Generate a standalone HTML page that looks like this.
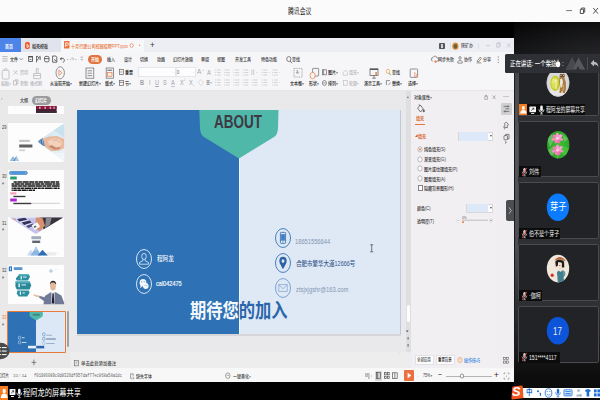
<!DOCTYPE html>
<html lang="zh-CN"><head><meta charset="utf-8"><title>腾讯会议</title>
<style>
html,body{margin:0;padding:0;}
body{width:600px;height:400px;overflow:hidden;background:#000;position:relative;font-family:"Liberation Sans","Noto Sans CJK SC",sans-serif;}
.b{position:absolute;box-sizing:border-box;}
.t{position:absolute;white-space:nowrap;transform-origin:0 50%;display:block;}
svg{position:absolute;overflow:visible;}
.dd{font-size:.7em;margin-left:.12em;position:relative;top:-.08em;font-family:"DejaVu Sans",sans-serif;}
</style></head><body>
<div class="b" style="left:0px;top:0px;width:600px;height:21.5px;background:#fbfbfb;"></div>
<span class="t" style="left:287.6px;top:7.50px;font-size:7.6px;line-height:7.6px;color:#222;font-weight:400;transform:scaleX(0.77);">腾讯会议</span>
<svg style="left:560px;top:4px" width="40" height="14" viewBox="560 4 40 14"><g stroke="#555" stroke-width="1" fill="none"><path d="M566.200 10.600h5.800" stroke="#777"/><path d="M580.3 9.2h3.2v4.3h-3.2z M581.6 9.2v-1.2h3.1v4.2h-1.2"/><path d="M593.3 8l4.6 5.6M597.9 8l-4.6 5.6"/></g></svg>
<div class="b" style="left:514px;top:21.5px;width:86px;height:378.5px;background:#1b1c1e;background:radial-gradient(ellipse 120px 60px at 100% 40px,rgba(40,41,44,0.9),rgba(40,41,44,0) 100%),linear-gradient(180deg,#030303 0,#0a0a0b 20px,#19191b 50px,#1a1b1d 335px,#0e0e0f 352px,#080808 100%);"></div>
<div class="b" style="left:0px;top:38.4px;width:513.8px;height:343.4px;background:#e8e8e8;"></div>
<div class="b" style="left:0px;top:38.4px;width:513.8px;height:13.2px;background:#eceef3;"></div>
<div class="b" style="left:0px;top:38.4px;width:21px;height:13.2px;background:#4d84ea;"></div>
<span class="t" style="left:5px;top:43.60px;font-size:5.0px;line-height:5.0px;color:#fff;font-weight:700;transform:scaleX(0.8);">首页</span>
<div class="b" style="left:21px;top:38.4px;width:40px;height:13.2px;background:#e1e4ec;"></div>
<div class="b" style="left:61px;top:39.5px;width:83px;height:12.1px;background:#f6f7f9;"></div>
<div class="b" style="left:0px;top:51.6px;width:513.8px;height:38.6px;background:#f6f6f8;"></div>
<div class="b" style="left:0px;top:90.2px;width:70px;height:279px;background:#e9e9e9;"></div>
<div class="b" style="left:70px;top:90.2px;width:341px;height:262px;background:#e9e8ea;"></div>
<div class="b" style="left:70px;top:352px;width:341px;height:17px;background:#ededed;"></div>
<div class="b" style="left:411px;top:90.2px;width:86px;height:279px;background:#f1eff1;"></div>
<div class="b" style="left:497px;top:90.2px;width:16.8px;height:279px;background:#f0eef0;"></div>
<div class="b" style="left:0px;top:368.4px;width:513.8px;height:13.4px;background:#f7f7f8;"></div>
<div class="b" style="left:77px;top:109.8px;width:162px;height:224.6px;background:#2e72b5;"></div>
<div class="b" style="left:239px;top:109.8px;width:162px;height:224.6px;background:#dee9f5;"></div>
<div class="b" style="left:238.9px;top:109.8px;width:0.9px;height:224.6px;background:#e6f8fc;"></div>
<svg style="left:199px;top:109.8px" width="80" height="50" viewBox="0 0 80 50"><path d="M0.3 0H79.5L79 18Q78.8 24.5 75 27L40 48.5L5 27Q1.2 24.5 1 18Z" fill="#50b8a9"/></svg>
<span class="t" style="left:214.3px;top:112.80px;font-size:18px;line-height:18px;color:#3d3a45;font-weight:700;transform:scaleX(0.75);">ABOUT</span>
<div class="b" style="left:0px;top:381.8px;width:514px;height:18.2px;background:#000;"></div>
<svg style="left:133.5px;top:246.5px" width="20" height="24" viewBox="-10 -12 20 24"><ellipse cx="0" cy="0" rx="7.5" ry="9.45" fill="none" stroke="#e8f0fa" stroke-width="0.9"/><g fill="none" stroke="#e8f0fa" stroke-width="0.8"><ellipse cx="0" cy="-2.6" rx="2.3" ry="3"/><path d="M-1.2 0.2v1.6L-4.4 3.4v1.8h8.8v-1.8L1.2 1.8v-1.6"/></g></svg>
<span class="t" style="left:157px;top:254.90px;font-size:7px;line-height:7px;color:#f2f6fb;font-weight:500;transform:scaleX(0.8);">程阿龙</span>
<svg style="left:133.5px;top:272.3px" width="20" height="24" viewBox="-10 -12 20 24"><ellipse cx="0" cy="0" rx="7.5" ry="9.45" fill="none" stroke="#e8f0fa" stroke-width="0.9"/><g fill="#f4f8fc"><ellipse cx="-1" cy="-1.2" rx="3.4" ry="3.8"/><ellipse cx="1.8" cy="2" rx="2.8" ry="3"/><path d="M-3.4 1.5l-0.6 2.4 2.2-1.2z"/></g><g fill="#2e72b5"><circle cx="-2.2" cy="-2.2" r="0.5"/><circle cx="0.2" cy="-2.2" r="0.5"/><circle cx="1" cy="1.4" r="0.4"/><circle cx="2.8" cy="1.4" r="0.4"/></g></svg>
<span class="t" style="left:156.2px;top:280.20px;font-size:7.2px;line-height:7.2px;color:#f2f6fb;font-weight:400;transform:scaleX(0.775);-webkit-text-stroke:0.2px #f2f6fb;">cal042475</span>
<svg style="left:272.6px;top:226.4px" width="20" height="24" viewBox="-10 -12 20 24"><ellipse cx="0" cy="0" rx="7.5" ry="9.45" fill="none" stroke="#3873b4" stroke-width="0.9"/><g fill="none" stroke="#3873b4" stroke-width="0.9"><rect x="-2.6" y="-5.6" width="5.2" height="11" rx="0.8"/></g><rect x="-1.9" y="-3.9" width="3.8" height="6.6" fill="#3f7fc6"/><rect x="-0.6" y="3.5" width="1.2" height="0.9" fill="#3873b4"/></svg>
<span class="t" style="left:295px;top:238.10px;font-size:7px;line-height:7px;color:#8395b4;font-weight:400;transform:scaleX(0.82);">18651556644</span>
<svg style="left:272.6px;top:251.2px" width="20" height="24" viewBox="-10 -12 20 24"><ellipse cx="0" cy="0" rx="7.5" ry="9.45" fill="none" stroke="#3873b4" stroke-width="0.9"/><path d="M0 6.2C-1.6 3.2 -3.7 0.6 -3.7 -1.9A3.7 4.3 0 0 1 3.7 -1.9C3.7 0.6 1.6 3.2 0 6.2Z" fill="#2d62a3"/><ellipse cx="0" cy="-1.9" rx="1.5" ry="1.8" fill="#dde8f6"/></svg>
<span class="t" style="left:296px;top:260.60px;font-size:6.6px;line-height:6.6px;color:#34568a;font-weight:500;transform:scaleX(0.835);">合肥市繁华大道12666号</span>
<svg style="left:272.6px;top:276.4px" width="20" height="24" viewBox="-10 -12 20 24"><ellipse cx="0" cy="0" rx="7.5" ry="9.45" fill="none" stroke="#7399cc" stroke-width="0.9"/><g fill="none" stroke="#88a8d2" stroke-width="0.8"><rect x="-4.2" y="-3.3" width="8.4" height="6.6"/><path d="M-4.2 -3.3L0 0.8L4.2 -3.3"/></g></svg>
<span class="t" style="left:296px;top:285.50px;font-size:7px;line-height:7px;color:#8395b4;font-weight:400;transform:scaleX(0.83);">ztsjxjgshr@163.com</span>
<div class="b" style="left:77px;top:300.8px;width:162px;height:30px;overflow:hidden"><span class="t" style="left:113.4px;top:0.5px;font-size:20px;line-height:20px;font-weight:700;color:#f4f8fc;transform:scaleX(0.8125)">期待您的加入</span></div>
<div class="b" style="left:239px;top:300.8px;width:162px;height:30px;overflow:hidden"><span class="t" style="left:-48.6px;top:0.5px;font-size:20px;line-height:20px;font-weight:700;color:#2b65aa;transform:scaleX(0.8125)">期待您的加入</span></div>
<svg style="left:369px;top:244px" width="6" height="9" viewBox="0 0 6 9"><path d="M1.2 0.8h3M2.7 0.8v7M1.2 7.8h3" stroke="#444" stroke-width="0.7" fill="none"/></svg>
<div class="b" style="left:77px;top:334.4px;width:324px;height:1.2px;background:#d4d6da;"></div>
<div class="b" style="left:406px;top:90.2px;width:5px;height:262px;background:#dfdee0;"></div>
<div class="b" style="left:400.4px;top:109.8px;width:0.9px;height:224.6px;background:#bdc9d9;"></div>
<div class="b" style="left:406.6px;top:304.5px;width:3.6px;height:17px;background:#fdfdfd;border-radius:2px;"></div>
<svg style="left:404px;top:328px" width="6" height="24" viewBox="404 328 6 24"><g fill="#555"><path d="M407.2 330.6l1.4 1.6h-2.8z" transform="rotate(180 407.2 331.4)"/><rect x="407.6" y="337" width="0.9" height="2.6"/><rect x="407.6" y="344" width="0.9" height="2.6"/></g></svg>
<div class="b" style="left:515.2px;top:73px;width:84.8px;height:296px;background:;background:linear-gradient(180deg,#2f3033 0,#2f3033 232px,#1c1c1e 277px,#101011 296px);"></div>
<div class="b" style="left:515.2px;top:73px;width:2.8px;height:296px;background:;background:linear-gradient(180deg,#44464a 0,#54565a 67px,#4c4e52 172px,#2e2f32 232px,#1c1c1e 277px,#101011 296px);"></div>
<div class="b" style="left:517.6px;top:59.3px;width:81.4px;height:56.6px;background:#222326;border:1px solid #4a4b4f;border-radius:1.8px;"></div>
<div class="b" style="left:517.6px;top:120.8px;width:81.4px;height:56.6px;background:#222326;border:1px solid #4a4b4f;border-radius:1.8px;"></div>
<div class="b" style="left:517.6px;top:182.3px;width:81.4px;height:56.6px;background:#222326;border:1px solid #4a4b4f;border-radius:1.8px;"></div>
<div class="b" style="left:517.6px;top:244.3px;width:81.4px;height:56.6px;background:#222326;border:1px solid #4a4b4f;border-radius:1.8px;"></div>
<div class="b" style="left:517.6px;top:306.3px;width:81.4px;height:56.6px;background:#222326;border:1px solid #4a4b4f;border-radius:1.8px;"></div>
<svg style="left:546px;top:68px" width="24" height="30" viewBox="546 68 24 30"><defs><clipPath id="c1"><ellipse cx="558" cy="82.8" rx="11.3" ry="13.8"/></clipPath></defs><ellipse cx="558" cy="82.8" rx="11.3" ry="13.8" fill="#d9d9db"/><g clip-path="url(#c1)"><ellipse cx="558" cy="92" rx="9" ry="5" fill="#e6e6e8"/><ellipse cx="555.2" cy="83.4" rx="4.9" ry="7.6" fill="#c6cc2c"/><ellipse cx="554.6" cy="83.2" rx="3.3" ry="5.6" fill="#dbe04e"/><ellipse cx="553.8" cy="81" rx="1.6" ry="2.4" fill="#e6ea78"/><path d="M555.6 78.4h0.9v10.6h-0.9z" fill="#eef0e4"/><path d="M554.8 80.6h2.4v1h-2.4z" fill="#eef0e4"/><path d="M559.6 75.2l1.2-1.6 1.4 0.8 1.6-0.8 1 1.8-0.4 2.6 1.4 4 0.2 6.4-1 4.6h-2.2l-0.4-3-1.4 3h-1.6l0.6-6-0.8-5z" fill="#a97a42"/><path d="M560.2 79l1.8-0.6 1 3.4-0.6 4.6-1.8 1.6-0.6-4.8z" fill="#ece8de"/><path d="M560.2 74.6h4.2v2.2h-4.2z" fill="#5a4630"/><circle cx="561" cy="75.6" r="0.5" fill="#f4f4f4"/><circle cx="563.4" cy="75.6" r="0.5" fill="#f4f4f4"/><path d="M562.6 84l1.8 1.4-0.4 5-1.6 1.2z" fill="#c79a5c"/></g><ellipse cx="558" cy="82.8" rx="11.1" ry="13.6" fill="none" stroke="#c4c4c6" stroke-width="0.5"/></svg>
<div class="b" style="left:518.5px;top:104.2px;width:66px;height:11.2px;background:#0b0b0c;"></div>
<div class="b" style="left:518.5px;top:104.2px;width:8.8px;height:11.2px;background:#f57c1f;"></div>
<svg style="left:518.5px;top:104.2px" width="9" height="11.2" viewBox="0 0 9 11.2"><ellipse cx="4.4" cy="3.9" rx="1.5" ry="1.9" fill="#fff"/><path d="M1.2 9.6c0-2.6 1.6-3.6 3.2-3.6s3.2 1 3.2 3.6z" fill="#fff"/></svg>
<svg style="left:529px;top:105.5px" width="8" height="9" viewBox="0 0 8 9"><rect x="0.4" y="0.6" width="6.6" height="5.6" rx="0.6" fill="#f4f4f4"/><path d="M2.2 4.6l2.6-2.4M4.8 2.2h-1.6M4.8 2.2v1.6" stroke="#222" stroke-width="0.7" fill="none"/><rect x="2.2" y="7" width="3" height="0.9" fill="#f4f4f4"/></svg>
<svg style="left:537.6px;top:105px" width="7" height="10" viewBox="0 0 7 10"><rect x="2.2" y="0.6" width="2.6" height="5.4" rx="1.3" fill="#f4f4f4"/><path d="M1 4.4a2.5 2.8 0 0 0 5 0M3.5 7.2v1.5M2.2 9h2.6" fill="none" stroke="#f4f4f4" stroke-width="0.8"/></svg>
<span class="t" style="left:545.5px;top:107.35px;font-size:6.3px;line-height:6.3px;color:#f4f4f4;font-weight:400;transform:scaleX(0.77);">程阿龙的屏幕共享</span>
<svg style="left:546px;top:130px" width="24" height="30" viewBox="546 130 24 30"><defs><clipPath id="c2"><ellipse cx="558.2" cy="144.7" rx="11.2" ry="13.8"/></clipPath><radialGradient id="g2" cx="0.55" cy="0.5" r="0.65"><stop offset="0" stop-color="#3fc234"/><stop offset="0.7" stop-color="#2fa42a"/><stop offset="1" stop-color="#257f22"/></radialGradient></defs><g clip-path="url(#c2)"><rect x="546" y="130" width="24" height="30" fill="url(#g2)"/><path d="M547 138l5-4 2 6-4 7zM548 150l5-3 1 7-4 3zM563 134l5 5-4 3z" fill="#8fd888" opacity="0.5"/><path d="M563 146l6 2-3 8-4-2z" fill="#4fd040" opacity="0.6"/><path d="M557.600 154.500v5" stroke="#7fcf58" stroke-width="0.7"/><g transform="translate(557.4 138.6) scale(1.16) translate(-557.4 -138.6)"><ellipse cx="555.08" cy="139.09" rx="2.80" ry="1.30" fill="#f58fc2" transform="rotate(170 555.08 139.09)"/><ellipse cx="559.72" cy="139.09" rx="2.80" ry="1.30" fill="#f58fc2" transform="rotate(10 559.72 139.09)"/><ellipse cx="555.54" cy="137.05" rx="2.70" ry="1.40" fill="#f27db6" transform="rotate(-145 555.54 137.05)"/><ellipse cx="559.33" cy="136.99" rx="2.80" ry="1.40" fill="#f9a6cf" transform="rotate(-35 559.33 136.99)"/><ellipse cx="557.40" cy="136.10" rx="2.50" ry="1.50" fill="#f797c8" transform="rotate(-90 557.40 136.10)"/><ellipse cx="558.22" cy="140.68" rx="2.30" ry="1.40" fill="#ee70ae" transform="rotate(65 558.22 140.68)"/><ellipse cx="556.62" cy="140.59" rx="2.20" ry="1.40" fill="#f283ba" transform="rotate(115 556.62 140.59)"/><ellipse cx="557.4" cy="138.29999999999998" rx="1.3" ry="1.4" fill="#fbc9e2"/></g><g transform="translate(557.6 150.4) scale(1.16) translate(-557.6 -150.4)"><ellipse cx="555.28" cy="150.89" rx="2.80" ry="1.30" fill="#f58fc2" transform="rotate(170 555.28 150.89)"/><ellipse cx="559.92" cy="150.89" rx="2.80" ry="1.30" fill="#f58fc2" transform="rotate(10 559.92 150.89)"/><ellipse cx="555.74" cy="148.85" rx="2.70" ry="1.40" fill="#f27db6" transform="rotate(-145 555.74 148.85)"/><ellipse cx="559.53" cy="148.79" rx="2.80" ry="1.40" fill="#f9a6cf" transform="rotate(-35 559.53 148.79)"/><ellipse cx="557.60" cy="147.90" rx="2.50" ry="1.50" fill="#f797c8" transform="rotate(-90 557.60 147.90)"/><ellipse cx="558.42" cy="152.48" rx="2.30" ry="1.40" fill="#ee70ae" transform="rotate(65 558.42 152.48)"/><ellipse cx="556.82" cy="152.39" rx="2.20" ry="1.40" fill="#f283ba" transform="rotate(115 556.82 152.39)"/><ellipse cx="557.6" cy="150.1" rx="1.3" ry="1.4" fill="#fbc9e2"/></g></g></svg>
<div class="b" style="left:518.5px;top:166.2px;width:22.5px;height:11px;background:#0c0c0d;"></div>
<svg style="left:520.8px;top:166.7px" width="7" height="10" viewBox="0 0 7 10"><rect x="2.3" y="1" width="2.4" height="5" rx="1.2" fill="#cfcfcf"/><path d="M1.2 4.6a2.3 2.6 0 0 0 4.6 0M3.5 7.2v1.4M2.2 8.8h2.6" fill="none" stroke="#bdbdbd" stroke-width="0.7"/><path d="M5.8 0.8L1.2 9" stroke="#e0413a" stroke-width="0.9"/></svg>
<span class="t" style="left:529px;top:169.25px;font-size:6.3px;line-height:6.3px;color:#f2f2f2;font-weight:400;transform:scaleX(0.8);">刘伟</span>
<svg style="left:546px;top:192px" width="24" height="30" viewBox="546 192 24 30"><ellipse cx="557.900" cy="207.200" rx="11.100" ry="13.800" fill="#0b7bff"/></svg>
<span class="t" style="left:549.6px;top:202.30px;font-size:10.4px;line-height:10.4px;color:#fff;font-weight:400;transform:scaleX(0.8);">芽子</span>
<div class="b" style="left:518.5px;top:228.2px;width:41.5px;height:11px;background:#0c0c0d;"></div>
<svg style="left:520.8px;top:228.7px" width="7" height="10" viewBox="0 0 7 10"><rect x="2.3" y="1" width="2.4" height="5" rx="1.2" fill="#cfcfcf"/><path d="M1.2 4.6a2.3 2.6 0 0 0 4.6 0M3.5 7.2v1.4M2.2 8.8h2.6" fill="none" stroke="#bdbdbd" stroke-width="0.7"/><path d="M5.8 0.8L1.2 9" stroke="#e0413a" stroke-width="0.9"/></svg>
<span class="t" style="left:529px;top:231.25px;font-size:6.3px;line-height:6.3px;color:#f2f2f2;font-weight:400;transform:scaleX(0.8);">伯不是个芽子</span>
<svg style="left:546px;top:254px" width="24" height="30" viewBox="546 254 24 30"><defs><clipPath id="c4"><ellipse cx="558" cy="268.6" rx="11.2" ry="13.8"/></clipPath></defs><ellipse cx="558" cy="268.6" rx="11.2" ry="13.8" fill="#f1e7db"/><g clip-path="url(#c4)"><path d="M557 272.6c0.6-2 2.4-2.8 4.200-2.600 2.400 0.200 4.200 1.800 4 4.600l-1.600 3 0.600 6.400h-6.200l-0.600-6z" fill="#427f8e"/><path d="M562.6 270.600c2 0 3 1.800 2.600 3.800l-1.800 2.200z" fill="#5a97a4"/><path d="M559.400 266h2.400l0.600 4.600-2 1.400-1.800-1.600z" fill="#f2dccb"/><path d="M555.300 262.200c0-3.600 8.700-3.800 8.800 0.400l0.200 4.600-1.800 0.600-0.800-1.600v-3.200l-3.400-0.800-0.600 3.800-1.800 0.800z" fill="#1f1b1c"/><path d="M558.200 262.200l3.400 0.600v3.200l-1.400 1.400-1.800-0.600z" fill="#f6e4d6"/><rect x="559" y="265.200" width="1.400" height="0.700" fill="#c8342e"/><path d="M554.400 260.600c1.400-2.600 4.600-3.800 7.600-3 2 0.600 3.400 2.200 3.800 4-3.600-1.600-7.600-2-11.400-1z" fill="#b58456"/><path d="M557.600 257.800c1.800-0.800 4.400-0.400 6 1.200-2-0.400-4-0.600-6-0.200z" fill="#b83a34"/><ellipse cx="552.200" cy="275.200" rx="1.600" ry="1.800" fill="#cf2f2c"/><path d="M553.800 275.600l3.600 1 0.200 1-3.800-0.800z" fill="#f2dccb"/></g></svg>
<div class="b" style="left:518.5px;top:290.2px;width:23.5px;height:11px;background:#0c0c0d;"></div>
<svg style="left:520.8px;top:290.7px" width="7" height="10" viewBox="0 0 7 10"><rect x="2.3" y="1" width="2.4" height="5" rx="1.2" fill="#cfcfcf"/><path d="M1.2 4.6a2.3 2.6 0 0 0 4.6 0M3.5 7.2v1.4M2.2 8.8h2.6" fill="none" stroke="#bdbdbd" stroke-width="0.7"/><path d="M5.8 0.8L1.2 9" stroke="#e0413a" stroke-width="0.9"/></svg>
<span class="t" style="left:529px;top:293.25px;font-size:6.3px;line-height:6.3px;color:#f2f2f2;font-weight:400;transform:scaleX(0.8);">·伽柯</span>
<svg style="left:546px;top:316px" width="24" height="30" viewBox="546 316 24 30"><ellipse cx="557.900" cy="330.800" rx="11.100" ry="13.800" fill="#0c54da"/></svg>
<span class="t" style="left:553.3px;top:325.70px;font-size:11px;line-height:11px;color:#ececec;font-weight:400;transform:scaleX(0.72);">17</span>
<div class="b" style="left:518.5px;top:351.8px;width:41.5px;height:11px;background:#0c0c0d;"></div>
<svg style="left:520.8px;top:352.3px" width="7" height="10" viewBox="0 0 7 10"><rect x="2.3" y="1" width="2.4" height="5" rx="1.2" fill="#cfcfcf"/><path d="M1.2 4.6a2.3 2.6 0 0 0 4.6 0M3.5 7.2v1.4M2.2 8.8h2.6" fill="none" stroke="#bdbdbd" stroke-width="0.7"/><path d="M5.8 0.8L1.2 9" stroke="#e0413a" stroke-width="0.9"/></svg>
<span class="t" style="left:529px;top:354.70px;font-size:6.6px;line-height:6.6px;color:#f2f2f2;font-weight:400;transform:scaleX(0.78);">151****4117</span>
<div class="b" style="left:505px;top:53.6px;width:95px;height:19.6px;background:#2e3035;border-radius:1.5px 0 0 1.5px;"></div>
<span class="t" style="left:510px;top:61.10px;font-size:6.8px;line-height:6.8px;color:#fff;font-weight:500;transform:scaleX(0.8);">正在讲话: 一个柴捻</span>
<svg style="left:555px;top:59px" width="6" height="9" viewBox="0 0 6 9"><ellipse cx="3" cy="5.2" rx="2.2" ry="3" fill="#fff"/><path d="M3 2.2v-1.6" stroke="#fff" stroke-width="0.8"/></svg>
<span class="t" style="left:561.5px;top:61.10px;font-size:6.8px;line-height:6.8px;color:#fff;font-weight:400;transform:scaleX(0.8);">:</span>
<svg style="left:565px;top:56px" width="22" height="15" viewBox="565 56 22 15"><path d="M565.8 69.4l6.2-12 3.4 6.4 3.2-6.4 6.6 12h-5.4l-1.8-3.4-1.8 3.4z" fill="#56585d"/><path d="M572 57.4l3.4 6.4-3 5.6h-6.600z" fill="#47494e"/></svg>
<div class="b" style="left:587px;top:57px;width:0.7px;height:13px;background:#4a4c50;"></div>
<svg style="left:590px;top:58.5px" width="9" height="10" viewBox="0 0 9 10"><path d="M4 0.8L0.6 4.2L4 7.6V5.6c2.2-0.2 3.4 0.6 4.4 2.6C8.2 5 7 3 4 2.8Z" fill="#b9bbbf"/></svg>
<div class="b" style="left:521px;top:387.6px;width:79px;height:10.6px;background:#fdfdfd;border-radius:2px 0 0 2px;"></div>
<svg style="left:510px;top:384.5px" width="14" height="15" viewBox="0 0 14 15"><path d="M2.200 2.400Q2.300 1.500 3.200 1.400L11.600 0.400Q12.600 0.400 12.700 1.400L13.400 12.200Q13.400 13.200 12.400 13.300L2.400 14.400Q1.400 14.400 1.400 13.400Z" fill="#f2551f"/></svg>
<span class="t" style="left:512.4px;top:385.05px;font-size:13.5px;line-height:13.5px;color:#fff;font-weight:700;transform:scaleX(0.95);font-style:italic;">S</span>
<span class="t" style="left:525.6px;top:389.25px;font-size:7.5px;line-height:7.5px;color:#1b6fd6;font-weight:700;transform:scaleX(0.85);">中</span>
<svg style="left:535px;top:388px" width="65" height="10" viewBox="535 388 65 10"><g fill="#1b6fd6"><circle cx="538" cy="391.2" r="1"/><path d="M540 392.6c1.4 0.4 1.6 2 0.4 3.6l-0.8-0.4c0.8-1.2 0.6-2-0.2-2.4z"/><ellipse cx="548.5" cy="393" rx="3.3" ry="4.3" fill="none" stroke="#1b6fd6" stroke-width="0.8"/><circle cx="547.2" cy="391.6" r="0.5"/><circle cx="549.8" cy="391.6" r="0.5"/><path d="M546.8 394.2q1.7 1.8 3.4 0" fill="none" stroke="#1b6fd6" stroke-width="0.6"/><rect x="556.8" y="388.8" width="2.4" height="5" rx="1.2"/><path d="M555.6 392.4a2.4 2.6 0 0 0 4.8 0M558 395v1.6M556.6 396.8h2.8" fill="none" stroke="#1b6fd6" stroke-width="0.7"/><rect x="564" y="389.8" width="8" height="6" rx="0.6" fill="none" stroke="#1b6fd6" stroke-width="0.9"/><rect x="565.2" y="391.2" width="5.6" height="1"/><rect x="565.2" y="393.2" width="5.6" height="1.2"/><path d="M585 390.4l1.6-1.2h2.6l1.6 1.2-0.8 1.6-0.8-0.5v5h-2.6v-5l-0.8 0.5z"/><rect x="594" y="389.4" width="2.6" height="3"/><rect x="597.4" y="389.4" width="2.6" height="3"/><rect x="594" y="393.4" width="2.6" height="3"/><rect x="597.4" y="393.4" width="2.6" height="3"/></g><g fill="#a9b4c6"><circle cx="578.6" cy="390.6" r="1.4"/><path d="M576.2 396.6c0-3 4.8-3 4.8 0z"/><path d="M580 393.4l1.8 1v2.2h-1.8z"/></g></svg>
<svg style="left:25.4px;top:42.2px" width="6" height="7.5" viewBox="0 0 6 7.5"><rect x="0" y="0" width="4.8" height="7" rx="1.8" fill="#f2501e"/><path d="M2 1.6v4M2 3c2.4-0.6 2.4 2.8 0 2.4" stroke="#fff" stroke-width="0.8" fill="none"/></svg>
<span class="t" style="left:32.2px;top:43.50px;font-size:5.0px;line-height:5.0px;color:#2a2a2a;font-weight:500;transform:scaleX(0.8);">稻壳模板</span>
<svg style="left:64px;top:41.3px" width="6" height="8" viewBox="0 0 6 8"><rect x="0" y="0" width="5.4" height="7.6" rx="0.6" fill="#f0703a"/><path d="M1.6 6V1.8h1.6a1.2 1.2 0 0 1 0 2.4H1.6" stroke="#fff" stroke-width="0.8" fill="none"/></svg>
<span class="t" style="left:71.2px;top:43.50px;font-size:5.0px;line-height:5.0px;color:#e8763c;font-weight:500;transform:scaleX(0.815);">十月行建公司校园招聘PPT.pptx</span>
<svg style="left:128px;top:41px" width="16" height="9" viewBox="128 41 16 9"><ellipse cx="131.6" cy="45.5" rx="1.6" ry="2" fill="none" stroke="#e8763c" stroke-width="0.6"/><circle cx="139.6" cy="45.3" r="0.7" fill="#e8943c"/></svg>
<span class="t" style="left:149.5px;top:40.70px;font-size:9px;line-height:9px;color:#333;font-weight:400;transform:scaleX(0.9);">+</span>
<div class="b" style="left:439.2px;top:42.6px;width:5.8px;height:6.8px;background:#55585e;border-radius:0.8px;"></div>
<div class="b" style="left:441.3px;top:44px;width:1.6px;height:4px;background:#d0d0d0;"></div>
<svg style="left:451.5px;top:42px" width="7" height="8" viewBox="0 0 7 8"><ellipse cx="3.400" cy="4.200" rx="3.100" ry="3.600" fill="#d9903a"/><ellipse cx="3.400" cy="4.300" rx="1.900" ry="2.400" fill="#8a5a30"/><ellipse cx="3.600" cy="4" rx="1" ry="1.400" fill="#4a6a48"/></svg>
<span class="t" style="left:461px;top:43.30px;font-size:5.0px;line-height:5.0px;color:#555;font-weight:500;transform:scaleX(0.8);">陕矿办</span>
<div class="b" style="left:477.6px;top:43.4px;width:0.5px;height:5.4px;background:#dcdee2;"></div>
<div class="b" style="left:449.6px;top:43.4px;width:0.5px;height:5.4px;background:#dcdee2;"></div>
<svg style="left:484px;top:41px" width="30" height="9" viewBox="484 41 30 9"><g stroke="#b9bcc2" stroke-width="0.6" fill="none"><path d="M486 45.6h4"/><path d="M496.6 43.6h2.6v3.6h-2.6zM497.6 43.6v-1h2.6v3.6h-1"/><path d="M507 43.4l3.4 4M510.4 43.4l-3.4 4"/></g></svg>
<svg style="left:2px;top:55px" width="8" height="8" viewBox="0 0 8 8"><path d="M0.4 1.6h5.2M0.4 3.8h5.2M0.4 6h5.2" stroke="#8a8a8c" stroke-width="0.6"/></svg>
<span class="t" style="left:9.6px;top:57.20px;font-size:5.0px;line-height:5.0px;color:#333;font-weight:500;transform:scaleX(0.8);">文件</span>
<svg style="left:19px;top:56px" width="5" height="6" viewBox="0 0 5 6"><path d="M0.6 2.2l1.7 1.8 1.7-1.8" stroke="#666" stroke-width="0.6" fill="none"/></svg>
<svg style="left:27px;top:54px" width="58" height="10" viewBox="27 54 58 10"><g stroke="#484848" stroke-width="0.8" fill="none"><rect x="28.7" y="56.6" width="3.8" height="4.8"/><path d="M28.4 56.8h4.400" stroke-width="1.2"/><path d="M29.8 59.600h1.600"/><path d="M36.6 56.4a1.6 1.8 0 1 1 0 3.4M36.6 56v6.4M38.6 57.6l1.6-1.2v3.6"/><rect x="44.6" y="56.4" width="4.4" height="5.4" rx="1.2"/><path d="M44.6 58.6h4.4"/><path d="M52.6 56h3.2l1 1.2v5h-4.2zM54 59.4l2.4 1.6"/><path d="M61.6 57.4l-1.4 1.6 1.6 1M60.4 59c2-1.4 4-0.6 4 1.4 0 1-0.8 1.8-1.6 2"/></g><g fill="#8c8c8c"><circle cx="67.6" cy="59.4" r="0.5"/><circle cx="76" cy="59.4" r="0.5"/></g><g stroke="#b9b9b9" stroke-width="0.7" fill="none"><path d="M72.6 57.4l1.4 1.6-1.6 1M73.8 59c-2-1.4-3.6-0.6-3.6 1.4"/></g><path d="M80.6 57.2h2.4M81 59l0.8 1.2 0.8-1.2" stroke="#777" stroke-width="0.6" fill="none"/></svg>
<div class="b" style="left:87.6px;top:54.6px;width:14.6px;height:9px;background:#e2733c;border-radius:4.5px;"></div>
<span class="t" style="left:91.2px;top:57.20px;font-size:5.0px;line-height:5.0px;color:#fff;font-weight:700;transform:scaleX(0.8);">开始</span>
<span class="t" style="left:107px;top:57.20px;font-size:5.0px;line-height:5.0px;color:#3a3a3a;font-weight:500;transform:scaleX(0.8);">插入</span>
<span class="t" style="left:124px;top:57.20px;font-size:5.0px;line-height:5.0px;color:#3a3a3a;font-weight:500;transform:scaleX(0.8);">设计</span>
<span class="t" style="left:140.2px;top:57.20px;font-size:5.0px;line-height:5.0px;color:#3a3a3a;font-weight:500;transform:scaleX(0.8);">切换</span>
<span class="t" style="left:156.5px;top:57.20px;font-size:5.0px;line-height:5.0px;color:#3a3a3a;font-weight:500;transform:scaleX(0.8);">动画</span>
<span class="t" style="left:173px;top:57.20px;font-size:5.0px;line-height:5.0px;color:#3a3a3a;font-weight:500;transform:scaleX(0.8);">幻灯片放映</span>
<span class="t" style="left:201px;top:57.20px;font-size:5.0px;line-height:5.0px;color:#3a3a3a;font-weight:500;transform:scaleX(0.8);">审阅</span>
<span class="t" style="left:217.4px;top:57.20px;font-size:5.0px;line-height:5.0px;color:#3a3a3a;font-weight:500;transform:scaleX(0.8);">视图</span>
<span class="t" style="left:235px;top:57.20px;font-size:5.0px;line-height:5.0px;color:#3a3a3a;font-weight:500;transform:scaleX(0.8);">开发工具</span>
<span class="t" style="left:261px;top:57.20px;font-size:5.0px;line-height:5.0px;color:#3a3a3a;font-weight:500;transform:scaleX(0.8);">特色功能</span>
<svg style="left:285.5px;top:55.5px" width="7" height="8" viewBox="0 0 7 8"><ellipse cx="2.8" cy="3" rx="2.1" ry="2.5" fill="none" stroke="#555" stroke-width="0.7"/><path d="M4.2 5l1.8 2.2" stroke="#555" stroke-width="0.8"/></svg>
<span class="t" style="left:292.4px;top:57.20px;font-size:5.0px;line-height:5.0px;color:#3a3a3a;font-weight:500;transform:scaleX(0.8);">查找</span>
<svg style="left:431px;top:55px" width="8" height="9" viewBox="0 0 8 9"><path d="M1.8 6.2a1.6 1.8 0 0 1 0.2-3.6a2.2 2.4 0 0 1 4.2 0.6a1.4 1.5 0 0 1 0 3" fill="none" stroke="#666" stroke-width="0.7"/><circle cx="4.6" cy="6.6" r="1.2" fill="#e8763c"/></svg>
<span class="t" style="left:438.2px;top:57.20px;font-size:5.0px;line-height:5.0px;color:#444;font-weight:500;transform:scaleX(0.8);">同步失败</span>
<svg style="left:456px;top:54.5px" width="46" height="10" viewBox="456 54.5 46 10"><g stroke="#666" stroke-width="0.7" fill="none"><ellipse cx="460" cy="57.4" rx="1.1" ry="1.4"/><path d="M457.8 62.6v-1.4c0-1.6 4.4-1.6 4.4 0v1.4z"/><path d="M476.6 62.4h4.6M477 61l3.2-4.4 1.2 1.2-2.8 3.6z"/></g><g fill="#777"><rect x="497.8" y="56" width="0.9" height="1.2"/><rect x="497.8" y="58.6" width="0.9" height="1.2"/><rect x="497.8" y="61.2" width="0.9" height="1.2"/></g></svg>
<span class="t" style="left:464px;top:57.20px;font-size:5.0px;line-height:5.0px;color:#444;font-weight:500;transform:scaleX(0.8);">协作</span>
<span class="t" style="left:483px;top:57.20px;font-size:5.0px;line-height:5.0px;color:#444;font-weight:500;transform:scaleX(0.8);">分享</span>
<svg style="left:1px;top:66.5px" width="46" height="22" viewBox="1 66.5 46 22"><g stroke="#b9b9bb" stroke-width="0.8" fill="none"><rect x="2.200" y="69.800" width="6.800" height="8.800" rx="1.200"/><path d="M4 69.800a1.600 1.800 0 0 1 3.200 0"/><path d="M13.6 69.8l4 4.2M17.6 69.8l-4 4.2"/><rect x="13.6" y="80.4" width="3" height="4"/><path d="M15 80.4v-1h3v4h-1.4"/><path d="M33.600 73h7v5.200h-7zM36.300 73v-5h1.800v5M33.600 75h7"/></g></svg>
<span class="t" style="left:1px;top:81.20px;font-size:5.0px;line-height:5.0px;color:#b4b4b6;font-weight:500;transform:scaleX(0.8);">粘贴<span class="dd">▾</span></span>
<span class="t" style="left:20px;top:70.30px;font-size:5.0px;line-height:5.0px;color:#b4b4b6;font-weight:500;transform:scaleX(0.8);">剪切</span>
<span class="t" style="left:20px;top:81.20px;font-size:5.0px;line-height:5.0px;color:#b4b4b6;font-weight:500;transform:scaleX(0.8);">复制</span>
<span class="t" style="left:30px;top:81.20px;font-size:5.0px;line-height:5.0px;color:#b4b4b6;font-weight:500;transform:scaleX(0.8);">格式刷</span>
<svg style="left:54px;top:66px" width="12" height="14" viewBox="54 66 12 14"><ellipse cx="60.200" cy="72.800" rx="4.200" ry="6" fill="none" stroke="#777" stroke-width="0.8"/><path d="M58.900 70.200v5.200l3.200-2.600z" fill="none" stroke="#e8763c" stroke-width="0.700"/></svg>
<span class="t" style="left:50px;top:81.20px;font-size:5.0px;line-height:5.0px;color:#222;font-weight:500;transform:scaleX(0.8);">从当前开始<span class="dd">▾</span></span>
<svg style="left:84px;top:67px" width="12" height="12" viewBox="84 67 12 12"><g stroke="#666" stroke-width="0.7" fill="none"><rect x="86" y="68" width="7.800" height="10.200"/><path d="M87.600 70.800h4.600M87.600 73.200h4.600M87.600 75.600h4.600"/></g></svg>
<span class="t" style="left:79px;top:81.20px;font-size:5.0px;line-height:5.0px;color:#222;font-weight:500;transform:scaleX(0.8);">新建幻灯片<span class="dd">▾</span></span>
<svg style="left:105px;top:67px" width="10" height="12" viewBox="105 67 10 12"><g stroke="#666" stroke-width="0.7" fill="none"><rect x="106.200" y="68" width="7.200" height="10.200"/></g><rect x="107.400" y="69.600" width="4.800" height="1.400" fill="#888"/><rect x="107.600" y="72.600" width="4.400" height="4" fill="#fbe6da" stroke="#e8763c" stroke-width="0.600"/></svg>
<span class="t" style="left:105px;top:81.20px;font-size:5.0px;line-height:5.0px;color:#222;font-weight:500;transform:scaleX(0.8);">版式<span class="dd">▾</span></span>
<svg style="left:118px;top:68px" width="8" height="20" viewBox="118 68 8 20"><g stroke="#666" stroke-width="0.7" fill="none"><rect x="119.4" y="69.6" width="4" height="5"/><path d="M120.4 72h2"/><rect x="119.4" y="80.4" width="4" height="5"/><path d="M119.4 82.4h4"/></g></svg>
<span class="t" style="left:125px;top:70.30px;font-size:5.0px;line-height:5.0px;color:#222;font-weight:500;transform:scaleX(0.8);">重置</span>
<span class="t" style="left:125px;top:81.20px;font-size:5.0px;line-height:5.0px;color:#222;font-weight:500;transform:scaleX(0.8);">节<span class="dd">▾</span></span>
<div class="b" style="left:138px;top:67.2px;width:37.6px;height:10px;background:#fdfdfd;border:0.5px solid #e6e6ea;"></div>
<div class="b" style="left:175.6px;top:67.2px;width:20.6px;height:10px;background:#fdfdfd;border:0.5px solid #e6e6ea;"></div>
<span class="t" style="left:173px;top:70.30px;font-size:5.0px;line-height:5.0px;color:#999;font-weight:500;transform:scaleX(0.8);">·</span>
<span class="t" style="left:176.6px;top:70.30px;font-size:5.0px;line-height:5.0px;color:#555;font-weight:500;transform:scaleX(0.8);">0</span>
<span class="t" style="left:193px;top:70.30px;font-size:5.0px;line-height:5.0px;color:#999;font-weight:500;transform:scaleX(0.8);">·</span>
<span class="t" style="left:197px;top:68.20px;font-size:8px;line-height:8px;color:#a6a6aa;font-weight:400;transform:scaleX(0.8);">A</span>
<span class="t" style="left:201.6px;top:68.30px;font-size:4px;line-height:4px;color:#a6a6aa;font-weight:500;transform:scaleX(0.85);">+</span>
<span class="t" style="left:206.6px;top:69.10px;font-size:7px;line-height:7px;color:#a6a6aa;font-weight:400;transform:scaleX(0.8);">A</span>
<span class="t" style="left:210.4px;top:68.90px;font-size:4px;line-height:4px;color:#a6a6aa;font-weight:500;transform:scaleX(0.85);">-</span>
<span class="t" style="left:140.4px;top:78.90px;font-size:7px;line-height:7px;color:#a2a2a8;font-weight:700;transform:scaleX(0.8);">B</span>
<span class="t" style="left:148.6px;top:78.90px;font-size:7px;line-height:7px;color:#a2a2a8;font-weight:400;transform:scaleX(0.8);">I</span>
<span class="t" style="left:155.4px;top:78.90px;font-size:7px;line-height:7px;color:#a2a2a8;font-weight:400;transform:scaleX(0.8);">U</span>
<span class="t" style="left:163.4px;top:78.90px;font-size:7px;line-height:7px;color:#a2a2a8;font-weight:400;transform:scaleX(0.8);">S</span>
<span class="t" style="left:171.2px;top:78.90px;font-size:7px;line-height:7px;color:#a2a2a8;font-weight:400;transform:scaleX(0.8);">A</span>
<span class="t" style="left:180px;top:78.90px;font-size:7px;line-height:7px;color:#a2a2a8;font-weight:400;transform:scaleX(0.8);">X</span>
<span class="t" style="left:189px;top:78.90px;font-size:7px;line-height:7px;color:#a2a2a8;font-weight:400;transform:scaleX(0.8);">X</span>
<span class="t" style="left:197.6px;top:78.90px;font-size:7px;line-height:7px;color:#a2a2a8;font-weight:400;transform:scaleX(0.8);">◇</span>
<span class="t" style="left:206px;top:80.40px;font-size:5.0px;line-height:5.0px;color:#888;font-weight:500;transform:scaleX(0.8);">变<span class="dd">▾</span></span>
<div class="b" style="left:155.4px;top:85.6px;width:4px;height:0.5px;background:#aeaeb2;"></div>
<div class="b" style="left:171px;top:85.8px;width:4px;height:0.7px;background:#c8c8cc;"></div>
<span class="t" style="left:184.4px;top:78.70px;font-size:4.4px;line-height:4.4px;color:#b4b4b6;font-weight:500;transform:scaleX(0.8);">²</span>
<span class="t" style="left:193.4px;top:82.90px;font-size:4.4px;line-height:4.4px;color:#b4b4b6;font-weight:500;transform:scaleX(0.8);">₂</span>
<svg style="left:214px;top:67px" width="72" height="22" viewBox="214 67 72 22"><g stroke="#bdbdc1" stroke-width="0.7" fill="none"><path d="M215 70h1M216.8 70h4M215 72.5h1M216.8 72.5h4M215 75h1M216.8 75h4" stroke-width="0.6"/><path d="M224 70h1M225.8 70h4M224 72.5h1M225.8 72.5h4M224 75h1M225.8 75h4" stroke-width="0.6"/><path d="M233.4 70h1M235.20000000000002 70h4M233.4 72.5h1M235.20000000000002 72.5h4M233.4 75h1M235.20000000000002 75h4" stroke-width="0.6"/><path d="M242.6 70h1M244.4 70h4M242.6 72.5h1M244.4 72.5h4M242.6 75h1M244.4 75h4" stroke-width="0.6"/><path d="M261.6 70h1M263.40000000000003 70h4M261.6 72.5h1M263.40000000000003 72.5h4M261.6 75h1M263.40000000000003 75h4" stroke-width="0.6"/><path d="M272 70h1M273.8 70h4M272 72.5h1M273.8 72.5h4M272 75h1M273.8 75h4" stroke-width="0.6"/><path d="M215 80h1M216.8 80h4M215 82.5h1M216.8 82.5h4M215 85h1M216.8 85h4" stroke-width="0.6"/><path d="M224 80h1M225.8 80h4M224 82.5h1M225.8 82.5h4M224 85h1M225.8 85h4" stroke-width="0.6"/><path d="M233.4 80h1M235.20000000000002 80h4M233.4 82.5h1M235.20000000000002 82.5h4M233.4 85h1M235.20000000000002 85h4" stroke-width="0.6"/><path d="M242.6 80h1M244.4 80h4M242.6 82.5h1M244.4 82.5h4M242.6 85h1M244.4 85h4" stroke-width="0.6"/><path d="M251.6 80h1M253.4 80h4M251.6 82.5h1M253.4 82.5h4M251.6 85h1M253.4 85h4" stroke-width="0.6"/><path d="M261.6 80h1M263.40000000000003 80h4M261.6 82.5h1M263.40000000000003 82.5h4M261.6 85h1M263.40000000000003 85h4" stroke-width="0.6"/><path d="M272 80h1M273.8 80h4M272 82.5h1M273.8 82.5h4M272 85h1M273.8 85h4" stroke-width="0.6"/><path d="M251.8 69.4v5.6M253.6 69.4v5.6"/></g><g fill="#a9a9ad"><circle cx="257" cy="72.4" r="0.45"/><circle cx="269.4" cy="72.4" r="0.45"/><circle cx="279.8" cy="72.4" r="0.45"/><circle cx="279.8" cy="82.6" r="0.45"/></g></svg>
<svg style="left:292px;top:67px" width="12" height="12" viewBox="292 67 12 12"><rect x="294" y="68.4" width="8" height="8.6" fill="none" stroke="#777" stroke-width="0.6" stroke-dasharray="1 0.7"/></svg>
<span class="t" style="left:296.3px;top:71.00px;font-size:4.6px;line-height:4.6px;color:#555;font-weight:500;transform:scaleX(0.85);">A</span>
<span class="t" style="left:290px;top:81.20px;font-size:5.0px;line-height:5.0px;color:#222;font-weight:500;transform:scaleX(0.8);">文本框<span class="dd">▾</span></span>
<svg style="left:308px;top:67px" width="13" height="14" viewBox="308 67 13 14"><rect x="312.6" y="68.4" width="6" height="7.6" rx="0.6" fill="none" stroke="#666" stroke-width="0.7"/><ellipse cx="312.6" cy="75.6" rx="2.6" ry="3.2" fill="#f6f6f8" stroke="#e8763c" stroke-width="0.7"/></svg>
<span class="t" style="left:309px;top:81.20px;font-size:5.0px;line-height:5.0px;color:#222;font-weight:500;transform:scaleX(0.8);">形状<span class="dd">▾</span></span>
<svg style="left:321px;top:68px" width="8" height="20" viewBox="321 68 8 20"><g stroke="#666" stroke-width="0.7" fill="none"><rect x="322.4" y="69.8" width="4" height="5"/><path d="M323.6 69.8v5"/><ellipse cx="324.4" cy="83" rx="2" ry="2.5"/><path d="M323.2 83h2.4"/></g></svg>
<span class="t" style="left:328px;top:70.30px;font-size:5.0px;line-height:5.0px;color:#222;font-weight:500;transform:scaleX(0.8);">图片<span class="dd">▾</span></span>
<span class="t" style="left:328px;top:81.20px;font-size:5.0px;line-height:5.0px;color:#222;font-weight:500;transform:scaleX(0.8);">排列<span class="dd">▾</span></span>
<svg style="left:342px;top:68px" width="8" height="20" viewBox="342 68 8 20"><g stroke="#c2c2c6" stroke-width="0.7" fill="none"><path d="M343.2 72.6l2.2-2.6 2.2 2.6v2.6h-4.4z"/><rect x="343.4" y="80.6" width="3.8" height="4.6"/></g></svg>
<span class="t" style="left:349px;top:70.30px;font-size:5.0px;line-height:5.0px;color:#b4b4b6;font-weight:500;transform:scaleX(0.8);">填充<span class="dd">▾</span></span>
<span class="t" style="left:349px;top:81.20px;font-size:5.0px;line-height:5.0px;color:#b4b4b6;font-weight:500;transform:scaleX(0.8);">轮廓<span class="dd">▾</span></span>
<svg style="left:368px;top:67px" width="12" height="13" viewBox="368 67 12 13"><g stroke="#555" stroke-width="0.7" fill="none"><rect x="370" y="68.8" width="8" height="6.6"/><path d="M372.2 78.2h3.6M374 75.4v2.8"/></g><rect x="370" y="68.8" width="8" height="1.2" fill="#555"/><rect x="375.4" y="72" width="1.4" height="3.4" fill="#e8763c"/></svg>
<span class="t" style="left:364px;top:81.20px;font-size:5.0px;line-height:5.0px;color:#222;font-weight:500;transform:scaleX(0.8);">演示工具<span class="dd">▾</span></span>
<svg style="left:385px;top:68px" width="8" height="20" viewBox="385 68 8 20"><ellipse cx="388" cy="71.4" rx="1.7" ry="2.1" fill="none" stroke="#e8a03c" stroke-width="0.7"/><path d="M389.2 73.2l1.6 2" stroke="#666" stroke-width="0.7"/><g stroke="#666" stroke-width="0.7" fill="none"><path d="M386.4 85v-4.4h3.6M388.4 85.2l2.2-2.6"/></g></svg>
<span class="t" style="left:392px;top:70.30px;font-size:5.0px;line-height:5.0px;color:#222;font-weight:500;transform:scaleX(0.8);">查找</span>
<span class="t" style="left:392px;top:81.20px;font-size:5.0px;line-height:5.0px;color:#222;font-weight:500;transform:scaleX(0.8);">替换<span class="dd">▾</span></span>
<svg style="left:408px;top:67px" width="12" height="13" viewBox="408 67 12 13"><rect x="410.2" y="69" width="7.4" height="8.4" rx="0.8" fill="none" stroke="#666" stroke-width="0.7"/><path d="M414.6 72.4v4.2l1-0.9 0.8 1.7 0.7-0.4-0.8-1.6h1.3z" fill="#f6f6f8" stroke="#e8763c" stroke-width="0.5"/></svg>
<span class="t" style="left:408px;top:81.20px;font-size:5.0px;line-height:5.0px;color:#222;font-weight:500;transform:scaleX(0.8);">选择<span class="dd">▾</span></span>
<div class="b" style="left:0px;top:90px;width:513.8px;height:0.6px;background:#e6e6e8;"></div>
<span class="t" style="left:43.6px;top:88.10px;font-size:4px;line-height:4px;color:#888;font-weight:500;transform:scaleX(0.8);">·</span>
<span class="t" style="left:20px;top:98.20px;font-size:5.0px;line-height:5.0px;color:#3a3a3a;font-weight:500;transform:scaleX(0.8);">大纲</span>
<div class="b" style="left:32px;top:95.8px;width:19.4px;height:8.8px;background:#9b9b9d;border-radius:4.4px;"></div>
<span class="t" style="left:35.2px;top:98.30px;font-size:5.0px;line-height:5.0px;color:#fff;font-weight:700;transform:scaleX(0.8);">幻灯片</span>
<span class="t" style="left:1px;top:95.60px;font-size:5px;line-height:5px;color:#888;font-weight:500;transform:scaleX(0.8);">‹</span>
<div class="b" style="left:8px;top:106px;width:56.4px;height:8px;background:#fdfdfd;"></div>
<svg style="left:36px;top:106px" width="21" height="8" viewBox="0 0 21 8"><rect x="0" y="0" width="20.6" height="7" rx="0.8" fill="#4a1c30"/><rect x="0" y="0" width="20.6" height="3" fill="#8a1c40"/><g fill="#d890a8"><rect x="3" y="0.6" width="1.6" height="2.4"/><rect x="8.4" y="0.6" width="1.6" height="2.4"/><rect x="13.6" y="0.6" width="1.6" height="2.4"/><rect x="17.4" y="0.6" width="1.4" height="2.4"/></g><rect x="0" y="5" width="20.6" height="2" fill="#3a2a3a"/></svg>
<span class="t" style="left:14.5px;top:105.90px;font-size:4px;line-height:4px;color:#777;font-weight:500;transform:scaleX(0.8);">·</span>
<div class="b" style="left:8px;top:122.8px;width:56.4px;height:38.8px;background:#fdfdfe;"></div>
<span class="t" style="left:1.8px;top:125.20px;font-size:5.4px;line-height:5.4px;color:#3c3c3c;font-weight:400;transform:scaleX(0.74);">29</span>
<svg style="left:8px;top:122.8px" width="56.4" height="38.8" viewBox="8 122.8 56.4 38.8"><defs><clipPath id="t29"><path d="M64.4 122.8V161.6L37.4 141.4Z"/></clipPath><linearGradient id="g29" x1="0" y1="0" x2="1" y2="1"><stop offset="0" stop-color="#c4d6e4"/><stop offset="0.45" stop-color="#d9ecf4"/><stop offset="1" stop-color="#eef3f8"/></linearGradient></defs><g clip-path="url(#t29)"><rect x="36" y="122.8" width="29" height="39" fill="url(#g29)"/><path d="M52 128l12.400-4v14z" fill="#c9e2ee"/><path d="M44 152l20.400 1v9z" fill="#f1f5f9"/><path d="M37.400 138.400l5.600-0.400 2.400 7.200-4.800 1.800z" fill="#3f72ac"/><path d="M39.600 138.600l1.200 7.600M42 138.200l1.400 7" stroke="#dfe8f2" stroke-width="0.6"/><path d="M43 138.600l6-2.400 8-0.400 7.400 3v9l-5 2.600-8.400 0.600-6-4.400z" fill="#e8b99c"/><path d="M47.400 141l6-3 6.600 1.200 2 4.200-3.400 4.800-6.200 1z" fill="#f3d2bd"/><path d="M48.600 146.200l5.400 3.400 5-0.600 1.600-2.400-4.600 0.800-4.400-2.600z" fill="#c98c72"/><path d="M52.400 139.800l5 0.400 3 2.600" stroke="#cf9a80" stroke-width="0.6" fill="none"/></g><g fill="#555"><rect x="19.200" y="139.600" width="10.600" height="2.200" opacity="0.32"/><rect x="19.200" y="144.300" width="13.200" height="3" fill="#222" opacity="0.72"/><rect x="19.200" y="149.200" width="5.800" height="1.800" opacity="0.25"/></g><path d="M9.800 160.800l3.200-4.400 1.800 2 1.600-2.600 2.400 5z" fill="#4d86c4"/><path d="M13 156.400l1.800 2-1.600 2.400H9.800z" fill="#9dbde0"/><path d="M16.400 155.800l2.400 5h-4z" fill="#c3d8ee" opacity="0.8"/></svg>
<div class="b" style="left:8px;top:169.6px;width:56.4px;height:39.2px;background:#fdfdfe;"></div>
<span class="t" style="left:1.8px;top:174.00px;font-size:5.4px;line-height:5.4px;color:#3c3c3c;font-weight:400;transform:scaleX(0.74);">30</span>
<span class="t" style="left:1.8px;top:181.65px;font-size:6.5px;line-height:6.5px;color:#444;font-weight:400;transform:scaleX(0.8);">*</span>
<svg style="left:8px;top:169.6px" width="56.4" height="39.2" viewBox="8 169.6 56.4 39.2"><rect x="9.300" y="170.900" width="18.100" height="3.200" rx="1.600" fill="#62aeea" stroke="#2c5f9e" stroke-width="0.5"/><rect x="11.400" y="172" width="13.600" height="1" fill="#2f6fb4" opacity="0.7"/><rect x="10.2" y="176.2" width="6.6" height="2.8" rx="0.4" fill="#23a06c"/><g stroke="#151515" stroke-width="1.5" fill="none"><path d="M13.600 181.500H59.600" stroke-dasharray="3.200 0.500 4.600 0.600 6.200 0.500 5 0.600"/><path d="M11.600 183.600H59.600" stroke-dasharray="2.600 0.500 5.200 0.500 3.600 0.600 7 0.500"/><path d="M11.600 185.700H59.600" stroke-dasharray="6 0.500 3.800 0.500 4.400 0.600 8 0.500"/><path d="M11.600 187.800H59.600" stroke-dasharray="1.200 0.500 3.400 0.500 3.200 0.500 3 0.600 7 0.500"/><path d="M11.600 189.900H35" stroke-dasharray="1.200 0.500 3.600 0.500 3.800 0.500 5 0.500"/></g><rect x="10.2" y="191.8" width="6.2" height="2.4" rx="0.4" fill="#f6a0b6"/><rect x="13.4" y="195.4" width="12" height="1.4" fill="#3a3a3a"/><rect x="10.2" y="198.2" width="6.6" height="2.8" rx="0.4" fill="#b224d2"/><rect x="13.4" y="202.4" width="18" height="1.4" fill="#3a3a3a"/><rect x="32" y="202.4" width="28" height="1.2" fill="#d8d8dc"/></svg>
<div class="b" style="left:8px;top:217.4px;width:56.4px;height:39.4px;background:#fdfdfe;"></div>
<span class="t" style="left:1.8px;top:220.80px;font-size:5.4px;line-height:5.4px;color:#3c3c3c;font-weight:400;transform:scaleX(0.74);">31</span>
<span class="t" style="left:1.8px;top:228.45px;font-size:6.5px;line-height:6.5px;color:#444;font-weight:400;transform:scaleX(0.8);">*</span>
<svg style="left:8px;top:217.4px" width="56.4" height="39.4" viewBox="8 217.4 56.4 39.4"><defs><clipPath id="t31"><path d="M9.400 217.800H63.200L35.800 234.400Z"/></clipPath></defs><g clip-path="url(#t31)"><rect x="8" y="217" width="57" height="20" fill="#c6c2ee"/><path d="M14 218.400l10-1.400 10 8-6 3.600z" fill="#dcdcf6"/><path d="M17 219.400l8-1.200 2.400 2-8 1.800zM21.600 223l8-2 2.200 1.800-7.600 2.600z" fill="#34325a"/><path d="M26 226.400l7-2.600 1.800 1.600-6.400 3z" fill="#4a4878"/><path d="M13.400 219.200l2-0.400 0.600 1-2 0.600z" fill="#d8a040"/><path d="M40 217h25v6l-14 9-8-3z" fill="#37323c"/><path d="M46 217h6l-2 8-5 4z" fill="#8a8690"/><path d="M36 217.600l6-0.600 3 9-5 5.600-5-3z" fill="#d9906c"/><path d="M31.600 225.600l5.600-3 3 4.400-5.400 3.600z" fill="#f6f6fa"/><path d="M33.600 226.800l2-1 1 1.400-2 1.200z" fill="#5a6a4a"/></g><rect x="31.400" y="236.600" width="9.600" height="3" fill="#62788c" opacity="0.6"/><rect x="32.200" y="241" width="8" height="2.400" fill="#34404e" opacity="0.8"/><path d="M42 255.800l6-3.400 9.400 0.600-2 2.800z" fill="#ececee"/><path d="M27 255.800l3.800-5.800 3.200 5.800z" fill="#c6daf0"/><path d="M30.600 255.800l5.400-8.800 5 8.800z" fill="#8db6e0"/><path d="M33.400 251.400l2.600-4.400 1.600 2.800-2 1.200z" fill="#b4d0ee"/><path d="M37.600 255.800l4.800-5.600 5.400 5.600z" fill="#2f6db6"/></svg>
<div class="b" style="left:8px;top:264.8px;width:56.4px;height:39.4px;background:#fdfdfe;"></div>
<span class="t" style="left:1.8px;top:268.40px;font-size:5.4px;line-height:5.4px;color:#3c3c3c;font-weight:400;transform:scaleX(0.74);">32</span>
<span class="t" style="left:1.8px;top:276.05px;font-size:6.5px;line-height:6.5px;color:#444;font-weight:400;transform:scaleX(0.8);">*</span>
<svg style="left:8px;top:264.8px" width="56.4" height="39.4" viewBox="8 264.8 56.4 39.4"><defs><clipPath id="t32"><rect x="8" y="264.8" width="56.4" height="39.400"/></clipPath></defs><g clip-path="url(#t32)"><rect x="8.800" y="266.200" width="3.200" height="4.800" fill="#2d6fb5"/><rect x="10" y="267.200" width="0.800" height="2.800" fill="#f4f8fc"/><rect x="13.800" y="267" width="8.600" height="2.800" fill="#3b82c8" opacity="0.85"/><path d="M51 268.600l2.200 2.200-2.200 2.200-2.200-2.200z" fill="#c4cede"/><path d="M56 268.400l0.800 0.800-0.800 0.800-0.800-0.800z" fill="#dde4ee"/><g><path d="M19.400 274h9l1.600 2.200-2 4H16.600l-0.800-1.800z" fill="#2b8f9f"/><path d="M19.400 274h9l1 1.400H17.800z" fill="#58b8c4"/><path d="M15.600 281.400h14.200l1.400 4-1.600 3.800H16.800l-1.400-3z" fill="#2a8797"/><path d="M15.600 281.400h14.200l0.600 1.600H15.400z" fill="#4aaab8"/><path d="M17.400 290.200h11.400l0.800 2.400-2.400 3.600h-8.600l-1.800-3z" fill="#2b8f9f"/></g><g fill="#eef8fa"><rect x="20.600" y="275.800" width="1.200" height="3.400"/><rect x="23" y="276.200" width="3.600" height="1.400" opacity="0.7"/><rect x="18.400" y="283.400" width="1.400" height="3.600"/><rect x="21.400" y="284" width="4.600" height="1.400" opacity="0.7"/><rect x="19.800" y="291.400" width="1.200" height="3.200"/><rect x="22.400" y="292" width="2.400" height="1.400" opacity="0.700"/></g><ellipse cx="53" cy="285.800" rx="2.900" ry="4.600" fill="#e4b89c"/><path d="M50 284.400c-0.400-5 6.600-5 6.200 0.200-1-2-1.800-2.400-3.400-2.400s-2.200 0.600-2.800 2.200z" fill="#26221f"/><path d="M43.400 304.400l1.400-8.600 6-3.800h5l5.600 3.400 3.400 9z" fill="#707a96"/><path d="M51.400 291.800h3.200l-0.200 12.600h-2.800z" fill="#f6f6f8"/><path d="M52.400 293h1.300l0.500 9.400-1.100 1.800-1.200-1.800z" fill="#1c2030"/><path d="M46 297.600l-6.600-2-0.400 1.600 5.600 4.200z" fill="#707a96"/><path d="M39.400 295.600l-6-1.600 0.200 1.400 2.600 1.200 3 0.600z" fill="#e4b89c"/></g></svg>
<div class="b" style="left:7px;top:310.8px;width:58.6px;height:41.8px;background:#e87a3c;border-radius:1px;"></div>
<div class="b" style="left:8px;top:311.8px;width:28.2px;height:39.8px;background:#2e72b5;"></div>
<div class="b" style="left:36.2px;top:311.8px;width:28.4px;height:39.8px;background:#dde8f6;"></div>
<span class="t" style="left:1.8px;top:315.00px;font-size:5.4px;line-height:5.4px;color:#e8763c;font-weight:400;transform:scaleX(0.74);">33</span>
<span class="t" style="left:1.8px;top:322.65px;font-size:6.5px;line-height:6.5px;color:#444;font-weight:400;transform:scaleX(0.8);">*</span>
<svg style="left:8px;top:311.8px" width="56.6" height="39.8" viewBox="8 311.8 56.6 39.8"><path d="M29.6 311.8h13.2v3q0 1.4-1 2l-5.6 3.4-5.6-3.4q-1-0.6-1-2z" fill="#50b8a9"/><rect x="32.8" y="313.6" width="7" height="1.8" fill="#3d6a70" opacity="0.7"/><g fill="none" stroke="#e8f0fa" stroke-width="0.5"><ellipse cx="19.6" cy="337.6" rx="1.3" ry="1.6"/><ellipse cx="19.6" cy="342.2" rx="1.3" ry="1.6"/></g><g fill="#e8f0fa"><rect x="22" y="337.2" width="2.6" height="0.8"/><rect x="22" y="341.8" width="4.4" height="0.8"/><rect x="28" y="345.6" width="8.2" height="2.6"/></g><rect x="36.2" y="345.6" width="8" height="2.6" fill="#2b65aa"/><g fill="none" stroke="#3873b4" stroke-width="0.5"><ellipse cx="43.8" cy="334.2" rx="1.3" ry="1.6"/><ellipse cx="43.8" cy="338.6" rx="1.3" ry="1.6"/><ellipse cx="43.8" cy="342.8" rx="1.3" ry="1.6" stroke="#88a8d2"/></g><g fill="#8fa0bd"><rect x="46.2" y="334.6" width="5.8" height="0.8"/><rect x="46.2" y="338.4" width="9.6" height="0.8" fill="#3b5d8c"/><rect x="46.2" y="342.8" width="8.4" height="0.8"/></g></svg>
<div class="b" style="left:67.4px;top:311px;width:2px;height:36.4px;background:#a0a0a2;border-radius:1px;"></div>
<svg style="left:0px;top:341px" width="12" height="22" viewBox="0 341 12 22"><ellipse cx="0.6" cy="351" rx="9" ry="8.2" fill="#4a4a4c"/><g fill="#f0f0f0"><rect x="0" y="347" width="0.9" height="1.1"/><rect x="1.8" y="347" width="4.8" height="1.1"/><rect x="0" y="350.500" width="0.9" height="1.100"/><rect x="1.8" y="350.500" width="4.800" height="1.100"/><rect x="0" y="354" width="0.9" height="1.100"/><rect x="1.8" y="354" width="4.800" height="1.100"/></g></svg>
<svg style="left:31px;top:359px" width="6" height="7" viewBox="31 359 6 7"><path d="M31.6 362.4h4.6M33.9 359.6v5.6" stroke="#5a5a5c" stroke-width="0.7"/></svg>
<svg style="left:74px;top:359.6px" width="6" height="7" viewBox="0 0 6 7"><rect x="0.6" y="0.6" width="4" height="5.2" fill="none" stroke="#666" stroke-width="0.6"/><path d="M1.6 2.2h2M1.6 3.8h1.2" stroke="#666" stroke-width="0.5"/></svg>
<span class="t" style="left:81px;top:361.00px;font-size:5.0px;line-height:5.0px;color:#4a4a4a;font-weight:500;transform:scaleX(0.88);">单击此处添加备注</span>
<span class="t" style="left:74px;top:353.50px;font-size:4px;line-height:4px;color:#666;font-weight:500;transform:scaleX(0.8);">·</span>
<span class="t" style="left:398.6px;top:350.70px;font-size:4px;line-height:4px;color:#666;font-weight:500;transform:scaleX(0.8);">·</span>
<span class="t" style="left:-1.8px;top:374.20px;font-size:4.6px;line-height:4.6px;color:#555;font-weight:500;transform:scaleX(0.8);">幻灯片</span>
<span class="t" style="left:13.2px;top:374.20px;font-size:4.6px;line-height:4.6px;color:#555;font-weight:500;transform:scaleX(1.05);font-family:'Liberation Serif',serif;">33 / 34</span>
<span class="t" style="left:34px;top:374.20px;font-size:4.6px;line-height:4.6px;color:#666;font-weight:500;transform:scaleX(0.84);font-family:'Liberation Mono',monospace;">f01086089c0d8326df957daf77ec868a58a1dc</span>
<svg style="left:130.4px;top:372.6px" width="5" height="7" viewBox="0 0 5 7"><path d="M0.6 0.8h2.6v2.4M0.6 0.8v4.6h1.6M2.6 4l1.6 1.2-1.6 1.2" fill="none" stroke="#666" stroke-width="0.6"/></svg>
<span class="t" style="left:136px;top:374.00px;font-size:5.0px;line-height:5.0px;color:#444;font-weight:500;transform:scaleX(0.8);">缺失字体</span>
<svg style="left:225.4px;top:372.4px" width="6" height="7.4" viewBox="0 0 6 7.4"><ellipse cx="2.8" cy="3.7" rx="2.2" ry="2.8" fill="none" stroke="#666" stroke-width="0.6"/><path d="M1.6 3.4h2.4" stroke="#666" stroke-width="0.5"/></svg>
<span class="t" style="left:233px;top:374.00px;font-size:5.0px;line-height:5.0px;color:#444;font-weight:500;transform:scaleX(0.8);">一键美化<span class="dd">▾</span></span>
<div class="b" style="left:374.6px;top:370.6px;width:7.4px;height:10px;background:#d6d6d8;border-radius:0.8px;"></div>
<svg style="left:363px;top:370px" width="38" height="11" viewBox="363 370 38 11"><g stroke="#555" stroke-width="0.7" fill="none"><path d="M365 374h4.6M365 376h4.6M368 378h1.8"/><rect x="376.4" y="372.6" width="4" height="6"/><path d="M377.6 372.6v6"/><rect x="384.4" y="372.6" width="1.8" height="2.2"/><rect x="387.4" y="372.6" width="1.8" height="2.2"/><rect x="384.4" y="376.2" width="1.8" height="2.2"/><rect x="387.4" y="376.2" width="1.8" height="2.2"/><rect x="392.4" y="372.8" width="4.8" height="5.6"/><path d="M394.8 372.8v5.6"/></g><circle cx="371.6" cy="376" r="0.45" fill="#666"/></svg>
<div class="b" style="left:404px;top:370.2px;width:10px;height:11px;background:#ea7040;border-radius:1px;"></div>
<svg style="left:404px;top:370.2px" width="10" height="11" viewBox="0 0 10 11"><path d="M3.6 2.6v5.8l3.6-2.9z" fill="#fff"/></svg>
<span class="t" style="left:416.6px;top:374.50px;font-size:4px;line-height:4px;color:#666;font-weight:500;transform:scaleX(0.8);">·</span>
<span class="t" style="left:423px;top:374.20px;font-size:4.6px;line-height:4.6px;color:#444;font-weight:500;transform:scaleX(0.8);">75%<span class="dd">▾</span></span>
<span class="t" style="left:438.2px;top:371.40px;font-size:8px;line-height:8px;color:#333;font-weight:400;transform:scaleX(0.9);">−</span>
<div class="b" style="left:446px;top:375.6px;width:46px;height:0.5px;background:#b4b4b6;"></div>
<svg style="left:459px;top:372px" width="6" height="8" viewBox="0 0 6 8"><ellipse cx="3" cy="4" rx="1.7" ry="2.1" fill="#fafafa" stroke="#555" stroke-width="0.6"/></svg>
<span class="t" style="left:494.4px;top:370.90px;font-size:9px;line-height:9px;color:#222;font-weight:400;transform:scaleX(0.9);">+</span>
<svg style="left:503px;top:372px" width="7" height="8" viewBox="0 0 7 8"><path d="M1 2.4v-1.4h1.4M4.6 1h1.4v1.4M6 5.6v1.4h-1.4M2.4 7h-1.4v-1.4" fill="none" stroke="#777" stroke-width="0.6"/><circle cx="3.5" cy="4" r="0.6" fill="#888"/></svg>
<div class="b" style="left:0px;top:385.8px;width:8.4px;height:14.2px;background:#f57c1f;"></div>
<svg style="left:0px;top:386.4px" width="8.4" height="13" viewBox="0 0 8.4 13"><ellipse cx="4.2" cy="5" rx="1.7" ry="2.2" fill="#fff"/><path d="M0.8 12c0-3.4 1.6-4.6 3.4-4.6s3.4 1.2 3.4 4.6z" fill="#fff"/></svg>
<svg style="left:9.2px;top:388.4px" width="14" height="11" viewBox="0 0 14 11"><rect x="0.6" y="1" width="5.8" height="6" rx="0.6" fill="#f4f4f4"/><path d="M2.2 5.2l2.4-2.4M4.6 2.8h-1.6M4.6 2.8v1.6" stroke="#222" stroke-width="0.7" fill="none"/><rect x="2" y="8" width="3" height="1" fill="#f4f4f4"/><rect x="9" y="0.8" width="2.6" height="5.6" rx="1.3" fill="#f4f4f4"/><path d="M7.8 4.6a2.5 2.8 0 0 0 5 0M10.3 7.6v1.6M9 9.6h2.6" fill="none" stroke="#f4f4f4" stroke-width="0.8"/></svg>
<span class="t" style="left:23px;top:389.00px;font-size:9.2px;line-height:9.2px;color:#fff;font-weight:400;transform:scaleX(0.79);">程阿龙的屏幕共享</span>
<span class="t" style="left:406.6px;top:94.50px;font-size:4px;line-height:4px;color:#666;font-weight:500;transform:scaleX(0.8);">▴</span>
<span class="t" style="left:414px;top:95.20px;font-size:5.0px;line-height:5.0px;color:#333;font-weight:500;transform:scaleX(0.8);">对象属性<span class="dd">▾</span></span>
<svg style="left:483px;top:94px" width="14" height="7" viewBox="483 94 14 7"><g stroke="#8a8a8e" stroke-width="0.6" fill="none"><path d="M484.8 99.4v-3.2h2.6v3.2zM485.6 96.2v-1h1v1"/><path d="M492.6 95.4l3 3.6M495.6 95.4l-3 3.6"/></g></svg>
<svg style="left:415px;top:103px" width="11" height="12" viewBox="415 103 11 12"><g stroke="#444" stroke-width="0.7" fill="none"><path d="M417.6 108.2l2.6-3.2 3 3.8-2.6 3.2z"/><path d="M419 104.4l1.2 1.6"/><path d="M423.8 109.6c0.8 1.2 0.8 2 0 2.4-0.8-0.4-0.8-1.2 0-2.4z" fill="#444"/></g></svg>
<span class="t" style="left:416.4px;top:116.20px;font-size:5.0px;line-height:5.0px;color:#d8632a;font-weight:700;transform:scaleX(0.8);">填充</span>
<div class="b" style="left:415px;top:123.6px;width:10.4px;height:0.8px;background:#e8763c;"></div>
<span class="t" style="left:414.6px;top:135.20px;font-size:3px;line-height:3px;color:#d8632a;font-weight:500;transform:scaleX(0.9);">◢</span>
<span class="t" style="left:417.6px;top:134.20px;font-size:5.0px;line-height:5.0px;color:#d8632a;font-weight:700;transform:scaleX(0.8);">填充</span>
<div class="b" style="left:458px;top:131.8px;width:35.4px;height:9.4px;background:#fdfdfd;border:0.5px solid #d8d8dc;"></div>
<div class="b" style="left:458.6px;top:132.4px;width:29.2px;height:8.2px;background:#dde8f8;"></div>
<span class="t" style="left:490px;top:135.30px;font-size:3.6px;line-height:3.6px;color:#444;font-weight:500;transform:scaleX(0.9);">▾</span>
<svg style="left:417px;top:145.79999999999998px" width="6" height="7" viewBox="0 0 6 7"><ellipse cx="3" cy="3.4" rx="2.1" ry="2.6" fill="#fdfdfd" stroke="#858588" stroke-width="0.55"/><ellipse cx="3" cy="3.4" rx="0.9" ry="1.1" fill="#e8763c"/></svg>
<span class="t" style="left:424px;top:147.40px;font-size:5.0px;line-height:5.0px;color:#333;font-weight:500;transform:scaleX(0.8);">纯色填充(S)</span>
<svg style="left:417px;top:155.79999999999998px" width="6" height="7" viewBox="0 0 6 7"><ellipse cx="3" cy="3.4" rx="2.1" ry="2.6" fill="#fdfdfd" stroke="#858588" stroke-width="0.55"/></svg>
<span class="t" style="left:424px;top:157.40px;font-size:5.0px;line-height:5.0px;color:#333;font-weight:500;transform:scaleX(0.8);">渐变填充(G)</span>
<svg style="left:417px;top:165.4px" width="6" height="7" viewBox="0 0 6 7"><ellipse cx="3" cy="3.4" rx="2.1" ry="2.6" fill="#fdfdfd" stroke="#858588" stroke-width="0.55"/></svg>
<span class="t" style="left:424px;top:167.00px;font-size:5.0px;line-height:5.0px;color:#333;font-weight:500;transform:scaleX(0.8);">图片或纹理填充(P)</span>
<svg style="left:417px;top:175.2px" width="6" height="7" viewBox="0 0 6 7"><ellipse cx="3" cy="3.4" rx="2.1" ry="2.6" fill="#fdfdfd" stroke="#858588" stroke-width="0.55"/></svg>
<span class="t" style="left:424px;top:176.80px;font-size:5.0px;line-height:5.0px;color:#333;font-weight:500;transform:scaleX(0.8);">图案填充(A)</span>
<div class="b" style="left:417.8px;top:185px;width:4.8px;height:5.8px;background:#fdfdfd;border:0.55px solid #858588;"></div>
<span class="t" style="left:424px;top:186.20px;font-size:5.0px;line-height:5.0px;color:#333;font-weight:500;transform:scaleX(0.8);">隐藏背景图形(H)</span>
<span class="t" style="left:417px;top:206.00px;font-size:5.0px;line-height:5.0px;color:#333;font-weight:500;transform:scaleX(0.8);">颜色(C)</span>
<div class="b" style="left:466px;top:203.6px;width:27.4px;height:9px;background:#fdfdfd;border:0.5px solid #d8d8dc;"></div>
<div class="b" style="left:466.6px;top:204.2px;width:21.4px;height:7.8px;background:#dde8f8;"></div>
<span class="t" style="left:490.2px;top:206.90px;font-size:3.6px;line-height:3.6px;color:#444;font-weight:500;transform:scaleX(0.9);">▾</span>
<span class="t" style="left:417px;top:219.00px;font-size:5.0px;line-height:5.0px;color:#333;font-weight:500;transform:scaleX(0.8);">透明度(T)</span>
<svg style="left:455px;top:214px" width="40" height="12" viewBox="455 214 40 12"><ellipse cx="458.2" cy="220.4" rx="1.8" ry="2.3" fill="#fdfdfd" stroke="#cfcfd3" stroke-width="0.5"/><path d="M457.4 220.4h1.6" stroke="#666" stroke-width="0.5"/><path d="M462 220.2h26" stroke="#9a9a9c" stroke-width="0.6"/><ellipse cx="491" cy="220.4" rx="1.8" ry="2.3" fill="#fdfdfd" stroke="#cfcfd3" stroke-width="0.5"/><path d="M490.2 220.4h1.6M491 219.4v2" stroke="#666" stroke-width="0.5"/><rect x="462.2" y="221.4" width="1.8" height="1.6" fill="#ee7a34"/></svg>
<span class="t" style="left:461.8px;top:215.70px;font-size:4px;line-height:4px;color:#555;font-weight:500;transform:scaleX(0.8);">0%</span>
<div class="b" style="left:415px;top:354.8px;width:18.6px;height:9.8px;background:#fdfdfd;border:0.5px solid #e2e2e6;"></div>
<div class="b" style="left:436px;top:354.8px;width:18.6px;height:9.8px;background:#fdfdfd;border:0.5px solid #e2e2e6;"></div>
<span class="t" style="left:417px;top:358.10px;font-size:4.4px;line-height:4.4px;color:#555;font-weight:500;transform:scaleX(0.78);">全部应用</span>
<span class="t" style="left:438px;top:358.10px;font-size:4.4px;line-height:4.4px;color:#111;font-weight:500;transform:scaleX(0.78);">重置背景</span>
<svg style="left:457px;top:356px" width="6" height="8" viewBox="0 0 6 8"><ellipse cx="3" cy="4" rx="2.1" ry="2.7" fill="none" stroke="#e8934a" stroke-width="0.6"/><path d="M3 2.6v1.8M3 5.2v0.5" stroke="#e8934a" stroke-width="0.6"/></svg>
<span class="t" style="left:464px;top:357.80px;font-size:5.0px;line-height:5.0px;color:#2f7fe0;font-weight:500;transform:scaleX(0.8);">操作技巧</span>
<div class="b" style="left:503.4px;top:95.8px;width:5.6px;height:0.5px;background:#c9c9cd;"></div>
<div class="b" style="left:501px;top:102.6px;width:10.6px;height:12.8px;background:#cfcfd1;border-radius:1.2px;"></div>
<svg style="left:500px;top:102px" width="13" height="50" viewBox="500 102 13 50"><g stroke="#555" stroke-width="0.7" fill="none"><path d="M503.6 106.4h5.6M503.6 111.4h5.6M505.4 108.8h3.8"/><path d="M508 105.4v2M505 110.4v2"/><path d="M506.200 122l2.400 2.800-1.400 0.600 0.200 2.200-3.800-0.400 1.400-2.200-0.600-1.400zM505.400 127.400l-1 2"/><rect x="504" y="135.6" width="3.4" height="4.2" rx="0.4"/><path d="M505.6 135.6v-1.2h3.4v4.4h-1.6M505 141.4l1.4 1-1.4 1"/></g></svg>
<svg style="left:502px;top:356px" width="9" height="10" viewBox="502 356 9 10"><g stroke="#666" stroke-width="0.6" fill="none"><rect x="503.6" y="357.4" width="1.8" height="2.2"/><rect x="506.6" y="357.4" width="1.8" height="2.2"/><rect x="503.6" y="361" width="1.8" height="2.2"/><rect x="506.6" y="361" width="1.8" height="2.2"/></g></svg>
<div class="b" style="left:506px;top:200.2px;width:8px;height:21.2px;background:#4c4d50;border-radius:2px 0 0 2px;"></div>
<svg style="left:506px;top:200.2px" width="8" height="21.2" viewBox="0 0 8 21.2"><path d="M3 7.4l2.2 3.2-2.2 3.2" fill="none" stroke="#c9c9cb" stroke-width="0.8"/></svg>
</body></html>
